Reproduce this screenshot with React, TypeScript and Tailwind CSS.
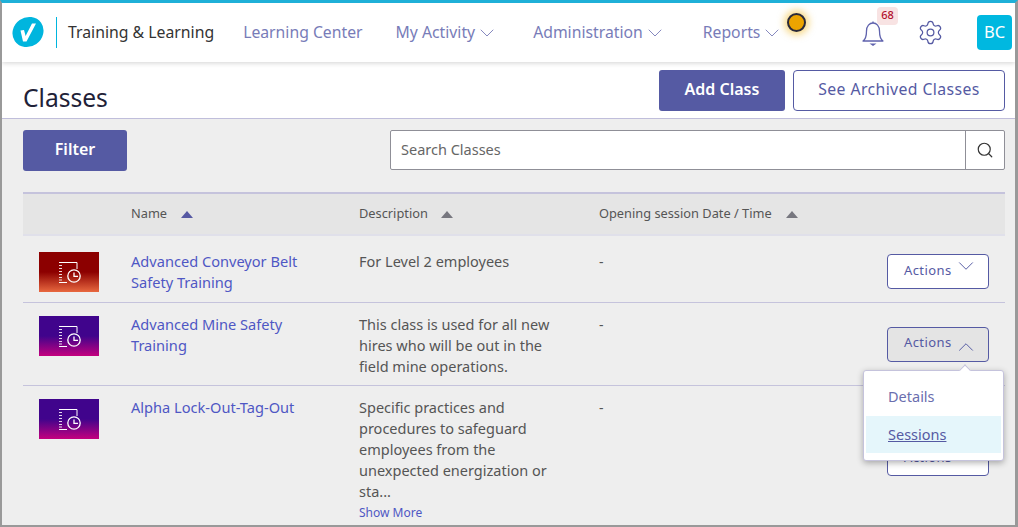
import React from "react";
import { ChevronDown, ChevronUp, Search, Settings } from "lucide-react";

const font = { fontFamily: '"Noto Sans", "Open Sans", sans-serif' };

function Thumb({ kind }: { kind: "red" | "purple" }) {
  const bg =
    kind === "red"
      ? "bg-[linear-gradient(180deg,#8c0000_0%,#8c0000_50%,#e8683f_100%)]"
      : "bg-[linear-gradient(180deg,#40048c_0%,#40048c_50%,#c4007e_100%)]";
  return (
    <div className={`w-[60px] h-10 flex items-center justify-center ${bg}`}>
      <svg width="24" height="24" viewBox="0 0 24 24" fill="none" stroke="#fff" strokeWidth="1">
        <path d="M2 2.5H20V9" />
        <path d="M2 22.5H10" />
        <path d="M2 5.5H5M2 8.5H5M2 11.5H5M2 14.5H5M2 17.5H5M2 20H5" opacity="0.85" />
        <circle cx="17" cy="16" r="6.2" strokeWidth="1.3" fill="none" />
        <path d="M17 12.5V16.4H21" strokeWidth="1.3" />
      </svg>
    </div>
  );
}

function SortArrow({ active }: { active?: boolean }) {
  return (
    <span
      className={`inline-block w-0 h-0 border-l-[6.5px] border-r-[6.5px] border-b-[7px] border-l-transparent border-r-transparent ${active ? "border-b-[#5659a3]" : "border-b-[#77777f]"}`}
    />
  );
}

function ActionsButton({ open }: { open?: boolean }) {
  return (
    <button className={`w-[102px] h-[35px] pl-4 rounded-[4px] border border-[#555aa3] flex items-center justify-start gap-[1px] text-[13px] tracking-[0.4px] text-[#555aa3] ${open ? "bg-[#e4e4e4]" : "bg-white"}`}>
      <span className={open ? "-mt-[3px]" : "-mt-0.5"}>Actions</span>
      {open ? <ChevronUp size={26} strokeWidth={0.9} className="mt-1" /> : <ChevronDown size={26} strokeWidth={0.9} className="-mt-[11px]" />}
    </button>
  );
}

function Row({ kind, name, desc, more, h, thumbPt, textPt, border = true, children }: { kind: "red" | "purple"; name: React.ReactNode; desc: React.ReactNode; more?: boolean; h: string; thumbPt: string; textPt: string; border?: boolean; children?: React.ReactNode }) {
  return (
    <div className={`flex shrink-0 ${h} ${border ? "border-b border-[#c5c3dc]" : ""}`}>
      <div className={`w-[108px] pl-4 shrink-0 ${thumbPt}`}>
        <Thumb kind={kind} />
      </div>
      <div className={`w-[228px] shrink-0 text-[14.6px] leading-[21px] text-[#4f57c4] ${textPt}`}>{name}</div>
      <div className={`w-[240px] shrink-0 pr-[40px] text-[14.5px] leading-[21px] text-[#555] ${textPt}`}>
        {desc}
        {more && <div className="text-[12px] text-[#4f57c4] mt-[2px] leading-[17px]">Show More</div>}
      </div>
      <div className={`flex-1 text-[14px] leading-[21px] text-[#555] ${textPt}`}>-</div>
      <div className="pr-4 pt-[18px]">{children}</div>
    </div>
  );
}

export default function App() {
  return (
    <div style={font} className="w-[1018px] h-[527px] overflow-hidden relative flex flex-col bg-[#eeeeee] border-t-[3px] border-t-[#1fb0d8] border-l-2 border-l-[#999] border-r-[3px] border-r-[#999] border-b-2 border-b-[#999]">
      <header className="h-[59px] shrink-0 bg-white flex items-center shadow-[0_1px_5px_rgba(0,0,0,0.18)] relative z-10">
        <svg className="ml-[10px] mb-[1px]" width="32" height="32" viewBox="0 0 32 32">
          <ellipse cx="16" cy="16" rx="16" ry="14.5" transform="rotate(-35 16 16)" fill="#00b5de" />
          <path d="M8.5 14.5L12 14L13.6 20L20 7.5H24L14.5 25.5H11Z" fill="#fff" />
        </svg>
        <div className="ml-[12px] mb-[1px] w-px h-[31px] bg-[#00b5de]" />
        <div className="ml-[11px] text-[15.8px] text-[#333] whitespace-nowrap">Training &amp; Learning</div>
        <nav className="flex items-center text-[15.75px] text-[#787cb8] whitespace-nowrap">
          <span className="ml-[29px]">Learning Center</span>
          <span className="ml-[33px] flex items-center -space-x-px">My Activity <ChevronDown size={24} strokeWidth={0.9} className="mt-[1px]" /></span>
          <span className="ml-[34px] flex items-center -space-x-px">Administration <ChevronDown size={24} strokeWidth={0.9} className="mt-[1px]" /></span>
          <span className="ml-[36px] flex items-center -space-x-px">Reports <ChevronDown size={24} strokeWidth={0.9} className="mt-[1px]" /></span>
        </nav>
        <div className="absolute left-[785px] top-[10px] w-[19px] h-[19px] rounded-full bg-[#eca400] border-[2.5px] border-[#2a2a3a] shadow-[0_0_7px_3px_rgba(240,180,20,0.5)]" />
        <div className="ml-auto flex items-center">
          <div className="relative mr-[33px] mt-[1px]">
            <svg width="22" height="25" viewBox="0 0 22 25" fill="none" stroke="#5f62ad" strokeWidth="1.3" className="block">
              <path d="M1 20C4 18 4.5 14 4.5 10C4.5 5 7.5 2 11 2C14.5 2 17.5 5 17.5 10C17.5 14 18 18 21 20Z" strokeLinejoin="round" />
              <path d="M11 0.5V2" />
              <path d="M7.5 22.5H14.5L11 25Z" fill="#5f62ad" stroke="none" />
            </svg>
            <span className="absolute left-[15px] -top-[14px] h-[18px] w-[21px] flex items-center justify-center rounded-sm bg-[#f8e3e3] text-[#b3112f] text-[11px] font-medium">68</span>
          </div>
          <Settings size={27} strokeWidth={1.1} className="text-[#555aa3] mr-[33px]" />
          <div className="w-[35px] h-[35px] mr-[3px] rounded-sm bg-[#00b8e0] text-white text-[16.5px] flex items-center justify-center">BC</div>
        </div>
      </header>

      <div className="h-[57px] shrink-0 bg-white border-b border-[#c0bedb] flex items-start pl-[21px] pr-[10px]">
        <h1 className="text-[24.6px] leading-[36px] mt-[18px] text-[#1f2238]">Classes</h1>
        <div className="ml-auto mt-[8px] flex gap-2">
          <button className="w-[126px] h-[41px] pb-[3px] rounded-[3px] bg-[#555aa3] text-white font-semibold text-[16px]">Add Class</button>
          <button className="w-[212px] h-[41px] pb-[2px] rounded-[4px] bg-white border border-[#555aa3] text-[#555aa3] text-[15.8px] tracking-[0.4px]">See Archived Classes</button>
        </div>
      </div>

      <div className="flex-1 min-h-0 pl-[21px] pr-[10px] pt-[11px]">
        <div className="flex items-start justify-between">
          <button className="w-[104px] h-[41px] pb-[3px] rounded-[3px] bg-[#555aa3] text-white font-semibold text-[16px]">Filter</button>
          <div className="w-[615px] h-[40px] flex border border-[#8f8f97] bg-white rounded-[2px]">
            <div className="flex-1 px-[10px] flex items-center text-[14.5px] text-[#666]">Search Classes</div>
            <div className="w-[39px] border-l border-[#8f8f97] flex items-center justify-center">
              <Search size={18} strokeWidth={1.6} className="text-[#333]" />
            </div>
          </div>
        </div>

        <div className="mt-[21px] flex flex-col">
          <div className="h-[44px] shrink-0 bg-[#e5e5e5] border-t-2 border-t-[#c5c3dc] border-b-2 border-b-[#e0e0ea] flex items-center text-[12.8px] text-[#555]">
            <div className="w-[108px]" />
            <div className="w-[228px] flex items-center gap-[14px]">Name <SortArrow active /></div>
            <div className="w-[240px] flex items-center gap-[13px]">Description <SortArrow /></div>
            <div className="flex items-center gap-[14px]">Opening session Date / Time <SortArrow /></div>
          </div>
          <Row h="h-[67px]" thumbPt="pt-[16px]" textPt="pt-[15px]" kind="red" name={<>Advanced Conveyor Belt<br />Safety Training</>} desc="For Level 2 employees">
            <ActionsButton />
          </Row>
          <Row h="h-[83px]" thumbPt="pt-[13px]" textPt="pt-[11px]" kind="purple" name={<>Advanced Mine Safety<br />Training</>} desc={<>This class is used for all new hires who will be out in the field mine operations.</>}>
            <div className="mt-[6px]"><ActionsButton open /></div>
          </Row>
          <Row h="h-[140px]" thumbPt="pt-[13px]" textPt="pt-[11px]" border={false} kind="purple" name="Alpha Lock-Out-Tag-Out" desc={<>Specific practices and procedures to safeguard employees from the unexpected energization or sta...</>} more>
            <div className="mt-[37px]"><ActionsButton /></div>
          </Row>
        </div>
      </div>

      <div className="absolute left-[861px] top-[367px] w-[141px] h-[91px] bg-white rounded-[3px] border border-[#c5c3dc] shadow-[0_2px_6px_rgba(0,0,0,0.3)] z-20 pt-[6px] px-[2px]">
        <span className="absolute -top-[5px] left-[97px] w-2 h-2 rotate-45 bg-white border-l border-t border-[#c5c3dc]" />
        <div className="h-[39px] pl-[22px] flex items-center text-[14.5px] text-[#6a6eae]">Details</div>
        <div className="h-[37px] pl-[22px] flex items-center text-[14.5px] text-[#555aa3] bg-[#e5f6fb] underline">Sessions</div>
      </div>
    </div>
  );
}
